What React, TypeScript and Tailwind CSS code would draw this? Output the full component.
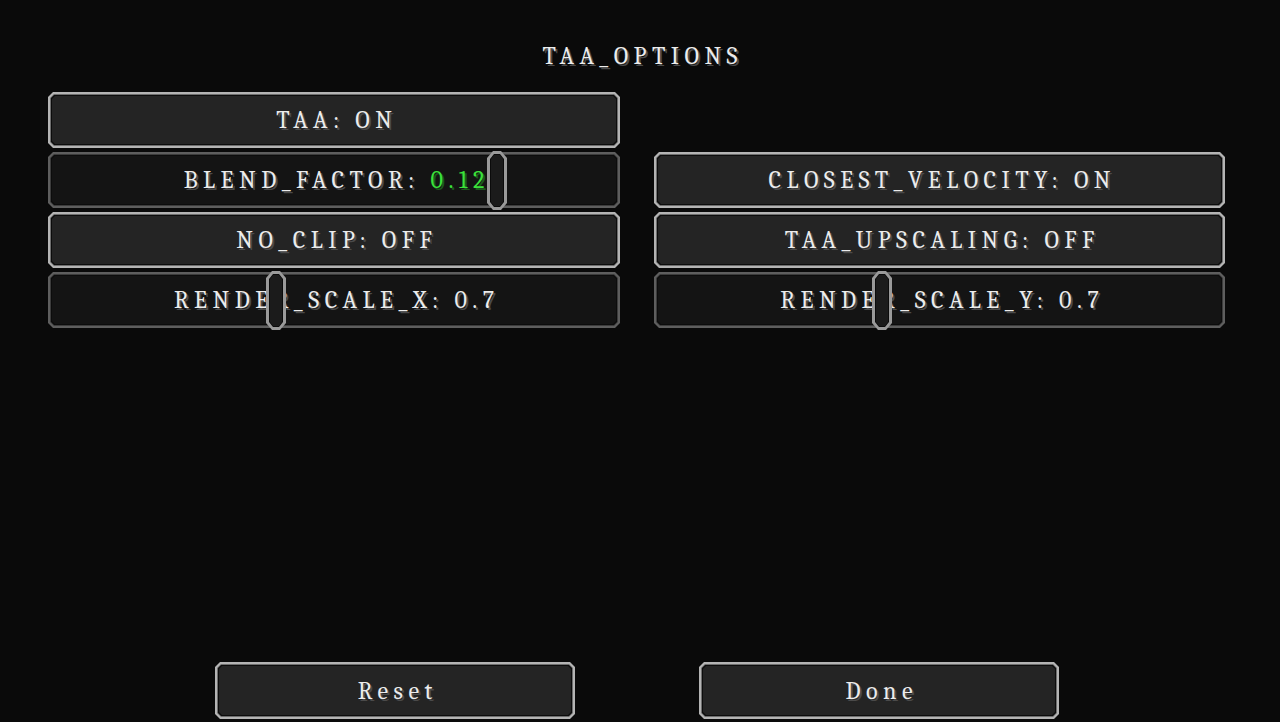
import type { ReactNode } from "react";

const cut5 =
  "[clip-path:polygon(5px_0,calc(100%_-_5px)_0,100%_5px,100%_calc(100%_-_5px),calc(100%_-_5px)_100%,5px_100%,0_calc(100%_-_5px),0_5px)]";
const cut4 =
  "[clip-path:polygon(4px_0,calc(100%_-_4px)_0,100%_4px,100%_calc(100%_-_4px),calc(100%_-_4px)_100%,4px_100%,0_calc(100%_-_4px),0_4px)]";
const cut3 =
  "[clip-path:polygon(3px_0,calc(100%_-_3px)_0,100%_3px,100%_calc(100%_-_3px),calc(100%_-_3px)_100%,3px_100%,0_calc(100%_-_3px),0_3px)]";

const label =
  "font-serif text-[24px] leading-none tracking-[5.5px] pl-[5.5px] text-[#ececec] [text-shadow:2px_2px_0_#4a4a4a] whitespace-nowrap";

function Frame({ slider, children }: { slider?: boolean; children: ReactNode }) {
  return (
    <div className={`h-full w-full p-[2px] ${cut5} ${slider ? "bg-[#5e5e5e]" : "bg-[#b4b4b4]"}`}>
      <div className={`h-full w-full p-px ${cut4} ${slider ? "bg-[#3c3c3c]" : "bg-[#6e6e6e]"}`}>
        <div className={`h-full w-full p-px ${cut3} bg-[#0c0c0c]`}>
          <div
            className={`flex h-full w-full items-center justify-center ${cut3} ${
              slider ? "bg-[#141414]" : "bg-[#242424]"
            }`}
          >
            {children}
          </div>
        </div>
      </div>
    </div>
  );
}

function Handle({ left }: { left: string }) {
  return (
    <div className={`absolute top-[-1px] h-[59px] w-[20px] ${left}`}>
      <div className="h-full w-full bg-[#9a9a9a] p-[3px] [clip-path:polygon(6px_0,calc(100%_-_6px)_0,100%_7px,100%_calc(100%_-_7px),calc(100%_-_6px)_100%,6px_100%,0_calc(100%_-_7px),0_7px)]">
        <div className="h-full w-full bg-[#0b0b0b] p-px [clip-path:polygon(4px_0,calc(100%_-_4px)_0,100%_5px,100%_calc(100%_-_5px),calc(100%_-_4px)_100%,4px_100%,0_calc(100%_-_5px),0_5px)]">
          <div className="h-full w-full bg-[#1b1b1b] [clip-path:polygon(3px_0,calc(100%_-_3px)_0,100%_4px,100%_calc(100%_-_4px),calc(100%_-_3px)_100%,3px_100%,0_calc(100%_-_4px),0_4px)]" />
        </div>
      </div>
    </div>
  );
}

function Toggle({ text }: { text: string }) {
  return (
    <div className="h-[56px]">
      <Frame>
        <span className={label}>{text}</span>
      </Frame>
    </div>
  );
}

function Slider({ name, value, green, left }: { name: string; value: string; green?: boolean; left: string }) {
  return (
    <div className="relative h-[56px]">
      <Frame slider>
        <span className={label}>
          {name}{" "}
          {green ? (
            <span className="text-[#3be23b] [text-shadow:2px_2px_0_#1d5a1d]">{value}</span>
          ) : (
            value
          )}
        </span>
      </Frame>
      <Handle left={left} />
    </div>
  );
}

export default function App() {
  return (
    <div className="h-[722px] w-full overflow-hidden bg-[#0a0a0a]">
      <div className="flex justify-center pt-[44px]">
        <span className={label}>TAA_OPTIONS</span>
      </div>

      <div className="mt-[24px] grid grid-cols-[572px_571px] gap-x-[34px] gap-y-[4px] pl-[48px]">
        <Toggle text="TAA: ON" />
        <div />
        <Slider name="BLEND_FACTOR:" value="0.12" green left="left-[439px]" />
        <Toggle text="CLOSEST_VELOCITY: ON" />
        <Toggle text="NO_CLIP: OFF" />
        <Toggle text="TAA_UPSCALING: OFF" />
        <Slider name="RENDER_SCALE_X:" value="0.7" left="left-[218px]" />
        <Slider name="RENDER_SCALE_Y:" value="0.7" left="left-[218px]" />
      </div>

      <div className="mt-[334px] flex gap-[124px] pl-[215px]">
        <div className="h-[57px] w-[360px]">
          <Frame>
            <span className={label}>Reset</span>
          </Frame>
        </div>
        <div className="h-[57px] w-[360px]">
          <Frame>
            <span className={label}>Done</span>
          </Frame>
        </div>
      </div>
    </div>
  );
}
